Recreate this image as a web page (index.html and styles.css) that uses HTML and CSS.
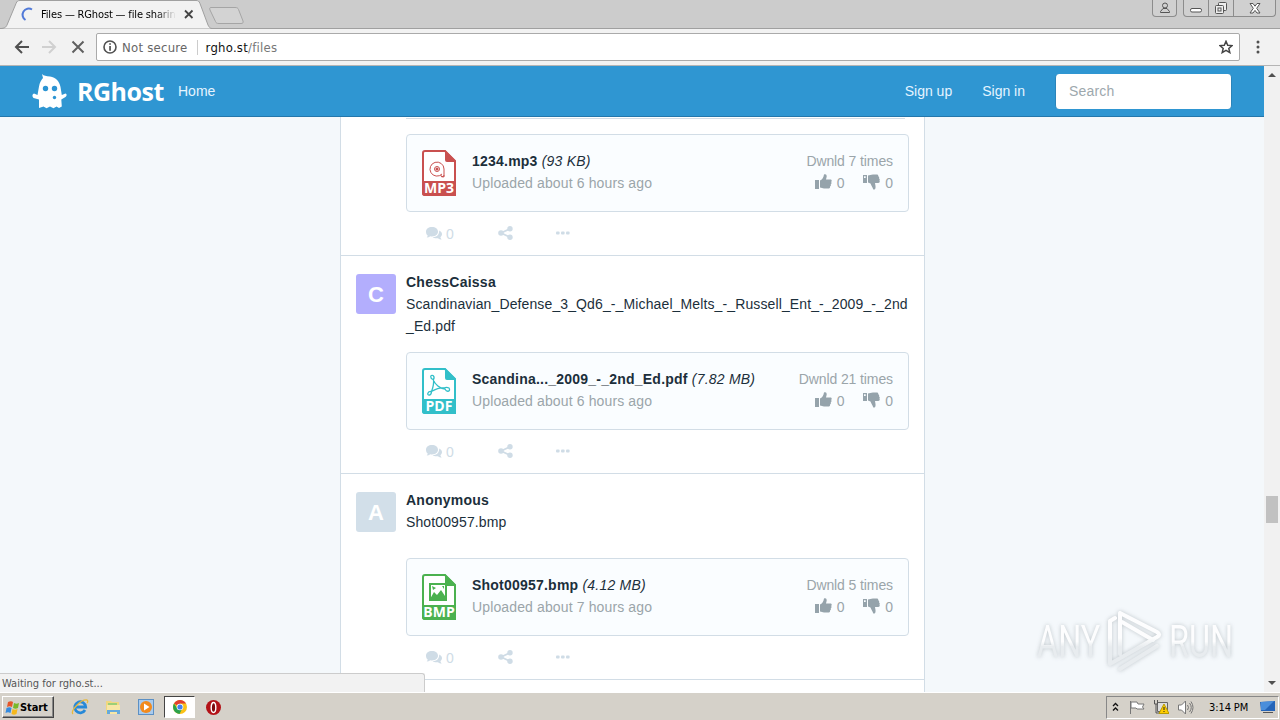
FILE: index.html
```html
<!DOCTYPE html>
<html>
    <head>
        <meta charset="utf-8">
        <title>Files — RGhost — file sharing</title>
        <link rel="stylesheet" href="styles.css">
    </head>
    <body>
        <svg class="sprite" width="0" height="0">
            <symbol id="icon-up" viewBox="0 0 17 16">
                <path d="M0 6h4v9H0zM5 6.500C7 6 8.500 3.500 9 .5c2-1 3 .5 2.600 2.500L11 5.500h4.500c1.500 0 1.500 2 .6 2.400.8.800.5 2-.4 2.300.6.900.1 2-.7 2.200.3 1.300-.4 2.100-1.500 2.100H9c-1.500 0-2.500-1-4-1z"/>
            </symbol>
            <symbol id="icon-down" viewBox="0 0 17 16">
                <path fill-rule="evenodd" d="M0 1h4v8H0zM1 2.300v1.700h1.700V2.300zM5 1.500C6.500 1.500 8 .5 10 .5h3.500c1.200 0 2 .7 1.700 1.800.9.300 1.300 1.200.8 2.200.9.500 1 1.600.4 2.200C17.300 7.500 16.500 9 15.300 9H12l.5 3c.3 3-.8 4-2.200 3.500C9.500 13 8 11 7.500 9.500L5 8.500z"/>
            </symbol>
            <symbol id="icon-comments" viewBox="0 0 17 14">
                <path d="M6 0c3.500 0 6 2 6 4.700S9.500 9.400 6 9.400c-.6 0-1.200 0-1.700-.2C3.300 10 2 10.500.7 10.600c.5-.6 1-1.300 1.100-2C.6 7.700 0 6.300 0 4.700 0 2 2.500 0 6 0z"/>
                <path d="M13.200 3.500c1.700.7 2.800 2 2.800 3.600 0 1.200-.6 2.300-1.600 3.100.2.900.7 1.700 1.300 2.300-1.400 0-2.800-.5-3.800-1.300-2 .4-4 0-5.300-.9 4-.2 6.800-2.600 6.600-6.800z"/>
            </symbol>
            <symbol id="icon-share" viewBox="0 0 15 14">
                <path d="M3 7l9-4.200M3 7l9 4.200" stroke="currentColor" stroke-width="1.800"/>
                <circle cx="3" cy="7" r="2.800"/><circle cx="12" cy="2.800" r="2.700"/><circle cx="12" cy="11.200" r="2.700"/>
            </symbol>
            <symbol id="icon-more" viewBox="0 0 14 4">
                <rect x="0" y=".5" width="3.600" height="3" rx="1"/><rect x="5" y=".5" width="3.600" height="3" rx="1"/><rect x="10" y=".5" width="3.600" height="3" rx="1"/>
            </symbol>
            <symbol id="file-sheet" viewBox="0 0 34 46">
                <path d="M3 1h20l10 10v34H3a2 2 0 0 1-2-2V3a2 2 0 0 1 2-2z" fill="#fff" stroke="currentColor" stroke-width="2"/>
                <path d="M23 0l11 11v1H25a2 2 0 0 1-2-2zM0 31h34v12a3 3 0 0 1-3 3H3a3 3 0 0 1-3-3z"/>
            </symbol>
        </svg>

        <div class="tabstrip">
            <svg class="tab-shape" width="250" height="28">
                <path d="M0 28.500C5 28.500 6 27 7 25L16 3.500C17 1 18 .5 20 .5H196c2 0 3 .5 4 3L208 25c1 2 2 3.500 4 3.500" fill="#f2f2f2" stroke="#a0a0a0"/>
                <path d="M211 7.500h24c2 0 3 .5 3.500 2L243 21c.5 1.500 0 2.500-2 2.500h-22c-2 0-3-.5-3.500-2L210 10c-.6-1.500-.4-2.500 1-2.500z" fill="#d3d3d3" stroke="#a5a5a5"/>
            </svg>
            <div class="tab">
                <svg width="13" height="14"><path d="M11 2.500A5.300 5.300 0 1 0 4.500 13" fill="none" stroke="#5079d8" stroke-width="2"/></svg>
                <span class="tab-title">Files — RGhost — file sharing</span>
                <svg width="10" height="10"><path d="M1 1.500L8.500 9M8.500 1.500L1 9" stroke="#444" stroke-width="1.800"/></svg>
            </div>
            <div class="window-buttons">
                <span class="win-btn user"><svg width="12" height="12" fill="none" stroke="#555"><circle cx="6" cy="3.500" r="2.500"/><path d="M1.500 10.500V9.500L4 6.500h4l2.500 3v1z"/></svg></span>
                <span class="win-btn min"><svg width="12" height="5"><rect x=".5" y=".5" width="11" height="3.500" rx="1.500" fill="#fff" stroke="#555"/></svg></span>
                <span class="win-btn max"><svg width="14" height="13" fill="#eee" stroke="#555"><rect x="4.500" y=".5" width="8" height="8" rx="1"/><rect x="1.500" y="3.500" width="8" height="8" rx="1"/><rect x="4" y="6" width="3" height="3"/></svg></span>
                <span class="win-btn close"><svg width="12" height="11"><path d="M1 .5h3l2 2.700L8 .5h3L7.700 5.300 11 10H8L6 7.400 4 10H1l3.300-4.700z" fill="#fff" stroke="#555"/></svg></span>
            </div>
        </div>

        <div class="toolbar">
            <svg class="nav-icons" width="74" height="16" fill="none" stroke-width="2">
                <path d="M16 8H3M9 2L3 8l6 6" stroke="#505050"/>
                <path d="M29 8h13M36 2l6 6-6 6" stroke="#d0d0d0"/>
                <path d="M59.500 2.500l11 11M70.500 2.500l-11 11" stroke="#606060"/>
            </svg>
            <div class="address">
                <svg width="14" height="14"><circle cx="7" cy="7" r="6" fill="none" stroke="#505050" stroke-width="1.600"/><path d="M6.200 3.200h1.700v1.600H6.200zM6.200 6h1.700v4.700H6.200z" fill="#505050"/></svg>
                <span class="not-secure">Not secure</span>
                <span class="url">rgho.st<span>/files</span></span>
                <svg class="star" width="14" height="14"><path d="M7 1.300l1.700 3.900 4.300.4-3.200 2.800 1 4.200L7 10.400l-3.800 2.200 1-4.200L1 5.600l4.300-.4z" fill="none" stroke="#444" stroke-width="1.500"/></svg>
            </div>
            <svg class="menu-dots" width="4" height="14" fill="#505050"><circle cx="2" cy="2" r="1.500"/><circle cx="2" cy="7" r="1.500"/><circle cx="2" cy="12" r="1.500"/></svg>
        </div>

        <div class="viewport">
            <div class="page">
                <div class="navbar">
                    <svg class="ghost" width="36" height="36" viewBox="0 0 36 36">
                        <path d="M10 1c2 2 4 2 8 2.500 6 1 9.500 5 10.500 10.500l1.300 8 3.700-1.500c1.500.5 1.500 2.500 0 3.500l-4.200 2.500.5 7-2.800 1.500-2.500-1.500-3 1.700-3.500-1.700-3.500 1.700-3-1.700-4.500 1.500V26.500L1.500 25C0 23.500 0 21 2 20.500l3.500 1.500L7 13.500C7.500 9.500 9.500 7 11 5z" fill="#fff"/>
                        <g fill="#2b94d3"><circle cx="13.500" cy="15.500" r="2.700"/><circle cx="22.500" cy="15.500" r="2.700"/><circle cx="22.500" cy="24.500" r="1.700"/></g>
                    </svg>
                    <span class="brand">RGhost</span>
                    <a class="home">Home</a>
                    <a class="sign-up">Sign up</a>
                    <a class="sign-in">Sign in</a>
                    <div class="search">Search</div>
                </div>
                <div class="feed">
                    <div class="post post-cut">
                        <div class="post-body">
                            <div class="card-end"></div>
                            <div class="card">
                                <svg class="file mp3" width="34" height="46">
                                    <use href="#file-sheet"/>
                                    <g fill="none" stroke="currentColor"><path d="M20 24a7 7 0 1 1 2-5v8l-3-1M19 25c-1 2 3 3 3 0"/><circle cx="15" cy="19" r="2.500"/></g><circle cx="15" cy="19" r="1.500"/>
                                    <text x="17" y="43">MP3</text>
                                </svg>
                                <div class="info"><div><b>1234.mp3</b> <i>(93 KB)</i></div><div class="muted">Uploaded about 6 hours ago</div></div>
                                <div class="stats"><div>Dwnld 7 times</div><div class="votes"><svg><use href="#icon-up"/></svg><span>0</span><svg><use href="#icon-down"/></svg><span>0</span></div></div>
                            </div>
                            <div class="actions"><svg class="a-comments"><use href="#icon-comments"/></svg><span>0</span><svg class="a-share"><use href="#icon-share"/></svg><svg class="a-more"><use href="#icon-more"/></svg></div>
                        </div>
                    </div>
                    <div class="post">
                        <div class="avatar purple">C</div>
                        <div class="post-body">
                            <div class="text"><b>ChessCaissa</b><p>Scandinavian_Defense_3_Qd6_-_Michael_Melts_-_Russell_Ent_-_2009_-_2nd<br>_Ed.pdf</p></div>
                            <div class="card">
                                <svg class="file pdf" width="34" height="46">
                                    <use href="#file-sheet"/>
                                    <path d="M11 7.500c-3-1-3 3 0 4 2 5 7 9 12 9.500 2 4 6 2 4-1-2-1-4-.5-5 0-5-1-8 1-12.500 3.500-4-.5-5 4-2 3.500 2-.5 2-2 2-3.500 2-5 2.500-8 2-12 .8-1.500.8-3-.5-4z" fill="none" stroke="currentColor" stroke-width="1.300"/>
                                    <text x="17" y="43">PDF</text>
                                </svg>
                                <div class="info"><div><b>Scandina..._2009_-_2nd_Ed.pdf</b> <i>(7.82 MB)</i></div><div class="muted">Uploaded about 6 hours ago</div></div>
                                <div class="stats"><div>Dwnld 21 times</div><div class="votes"><svg><use href="#icon-up"/></svg><span>0</span><svg><use href="#icon-down"/></svg><span>0</span></div></div>
                            </div>
                            <div class="actions"><svg class="a-comments"><use href="#icon-comments"/></svg><span>0</span><svg class="a-share"><use href="#icon-share"/></svg><svg class="a-more"><use href="#icon-more"/></svg></div>
                        </div>
                    </div>
                    <div class="post">
                        <div class="avatar">A</div>
                        <div class="post-body">
                            <div class="text"><b>Anonymous</b><p>Shot00957.bmp</p></div>
                            <div class="card">
                                <svg class="file bmp" width="34" height="46">
                                    <use href="#file-sheet"/>
                                    <rect x="8" y="10" width="16" height="16" fill="none" stroke="currentColor" stroke-width="2"/><path d="M8 25l4-7 3 3 4-5 4 6v4zM10 12l4 2-3 2zM20 12h2v3z"/>
                                    <text x="17" y="43">BMP</text>
                                </svg>
                                <div class="info"><div><b>Shot00957.bmp</b> <i>(4.12 MB)</i></div><div class="muted">Uploaded about 7 hours ago</div></div>
                                <div class="stats"><div>Dwnld 5 times</div><div class="votes"><svg><use href="#icon-up"/></svg><span>0</span><svg><use href="#icon-down"/></svg><span>0</span></div></div>
                            </div>
                            <div class="actions"><svg class="a-comments"><use href="#icon-comments"/></svg><span>0</span><svg class="a-share"><use href="#icon-share"/></svg><svg class="a-more"><use href="#icon-more"/></svg></div>
                        </div>
                    </div>
                </div>
            </div>
            <div class="scrollbar">
                <svg width="8" height="4"><path d="M0 4l4-4 4 4z" fill="#505050"/></svg>
                <div class="thumb"></div>
                <svg width="8" height="4"><path d="M0 0h8L4 4z" fill="#505050"/></svg>
            </div>
            <div class="status">Waiting for rgho.st...</div>
            <div class="watermark">
                <span>ANY</span>
                <svg width="60" height="64" viewBox="0 0 60 64" fill="none" stroke="url(#fade)" stroke-width="4" stroke-linejoin="round" stroke-linecap="round">
                    <linearGradient id="fade" gradientUnits="userSpaceOnUse" x1="0" y1="0" x2="0" y2="64"><stop offset=".45" stop-color="#fff"/><stop offset=".6" stop-color="#e6eaed"/></linearGradient>
                    <path d="M5 55V12l5-3M5 55l47-27c3-2 3-3 0-5L15 4v41"/>
                    <path d="M17 13l31 18M15 60l37-23"/>
                </svg>
                <span>RUN</span>
            </div>
        </div>

        <div class="taskbar">
            <div class="start">
                <svg width="15" height="15"><path d="M3 2c2-1 4-1 5 0L7 7C5 6 4 6 2 7z" fill="#e5562a"/><path d="M9 3c2 1 3 1 5 0l-1 5c-2 1-3 1-5 0z" fill="#79b829"/><path d="M1.500 8c2-1 4-1 5 0l-1 5c-2-1-3-1-5 0z" fill="#348be0"/><path d="M7.500 9c2 1 3 1 5 0l-1 5c-2 1-3 1-5 0z" fill="#f5b81c"/></svg>
                Start
            </div>
            <svg class="ie" width="18" height="18"><path d="M14 12a5.500 5.500 0 1 1 .7-3H5" fill="none" stroke="#2789d8" stroke-width="2.800"/><path d="M2 16C-1 13 10 1 16 2c1 .5 1 2 0 3" fill="none" stroke="#e8b93c" stroke-width="1.300"/></svg>
            <svg class="folder" width="18" height="17"><path d="M2 2h5l1 1h7v12H2z" fill="#f1d77f"/><path d="M4 4h9v3H4z" fill="#9bcf77"/><path d="M3 6h13v9H3z" fill="#f7e6a5"/><path d="M3 15v-4h13v4h-3v-2H6v2z" fill="#65a9dc"/></svg>
            <svg class="player" width="16" height="16"><rect x=".5" y=".5" width="15" height="15" fill="#a9cbed" stroke="#5c90c4"/><circle cx="8" cy="8" r="6" fill="#f28a1c"/><path d="M6 4.500v7L11.500 8z" fill="#fff"/></svg>
            <div class="task-active">
                <svg width="14" height="14" viewBox="0 0 14 14"><circle cx="7" cy="7" r="7" fill="#fbc116"/><path d="M7 7L1 3.500A7 7 0 0 1 13 3.500H7z" fill="#e13f31"/><path d="M1 3.500A7 7 0 0 0 6.500 14L9 9 4 8z" fill="#2ba24c"/><circle cx="7" cy="7" r="3.300" fill="#fff"/><circle cx="7" cy="7" r="2.600" fill="#4381ee"/></svg>
            </div>
            <svg class="opera" width="15" height="15"><circle cx="7.500" cy="7.500" r="7.500" fill="#b31217"/><ellipse cx="7.500" cy="7.500" rx="2.300" ry="5" fill="#7d0b0e" stroke="#fff" stroke-width="1.400"/></svg>
            <div class="tray">
                <svg class="chevrons" width="7" height="10" fill="none" stroke="#111" stroke-width="1.300"><path d="M1 4l2.500-2.500L6 4M1 8.500L3.500 6 6 8.500"/></svg>
                <svg class="flag" width="16" height="15"><path d="M1.500 1v13M2 2h6l1 2h6l-1.500 3L15 9H8L7 8H2z" fill="#fff" stroke="#777"/></svg>
                <svg class="network" width="16" height="16"><path d="M4.500 3.500h10v9h-10z" fill="#ddd" stroke="#666"/><path d="M1.500 1v4h3V1M3 5v9h4" fill="none" stroke="#555"/><path d="M11 5l5 9.500H6z" fill="#fc0" stroke="#b89b00"/><path d="M10.500 8h1v3h-1zM10.500 12h1v1h-1z" fill="#222"/></svg>
                <svg class="sound" width="17" height="15" fill="none" stroke="#777"><path d="M1.500 5h3l4-4v13l-4-4h-3z" fill="#fff"/><path d="M10.500 5q2 2.500 0 5M12.500 3q3.500 4.500 0 9M14 1.500q4 6 0 12"/></svg>
                <span class="clock">3:14 PM</span>
                <svg class="desktop" width="16" height="14"><path d="M0 2l15-1v10H1z" fill="#2464b8"/><path d="M1 2l13-1-9 9H1z" fill="#4a8edb"/><path d="M3 12h10v1H3z" fill="#555"/></svg>
            </div>
        </div>
    </body>
</html>
```
FILE: styles.css
```css
* {
    box-sizing: border-box;
}

html, body {
    margin: 0;
    padding: 0;
}

body {
    display: flex;
    flex-direction: column;
    width: 1280px;
    height: 720px;
    overflow: hidden;
    font-family: "Liberation Sans", Arial, sans-serif;
    font-size: 14px;
}

svg {
    display: block;
    flex: none;
}

p {
    margin: 0;
}

.sprite {
    position: absolute;
}

/* Browser frame */

.tabstrip {
    position: relative;
    display: flex;
    justify-content: space-between;
    height: 29px;
    background: #ccc;
    border-bottom: 1px solid #a0a0a0;
    font-family: "DejaVu Sans Condensed", "DejaVu Sans", sans-serif;
}

.tab-shape {
    position: absolute;
    left: 0;
    top: 0;
    height: 29px;
}

.tab {
    position: relative;
    display: flex;
    align-items: center;
    height: 28px;
    padding-left: 21px;
}

.tab-title {
    width: 135px;
    margin: 0 8px 0 7px;
    overflow: hidden;
    white-space: nowrap;
    font-size: 11px;
    letter-spacing: -0.15px;
    color: #000;
    -webkit-mask-image: linear-gradient(90deg, #000 115px, transparent);
}

.window-buttons {
    display: flex;
    height: 17px;
    margin-right: 4px;
}

.win-btn {
    display: flex;
    align-items: center;
    justify-content: center;
    border: 1px solid #8c8c8c;
    border-top: 0;
    border-left-width: 0;
    background: #d0d0d0;
}

.user {
    width: 25px;
    margin-right: 6px;
    border-left-width: 1px;
    border-radius: 0 0 4px 4px;
}

.min {
    width: 26px;
    padding-top: 4px;
    border-left-width: 1px;
    border-radius: 0 0 0 4px;
}

.max {
    width: 25px;
}

.close {
    width: 42px;
    border-radius: 0 0 4px 0;
}

.toolbar {
    display: flex;
    align-items: center;
    height: 37px;
    padding-left: 13px;
    background: #f2f2f2;
    border-bottom: 1px solid #b5b5b5;
}

.address {
    display: flex;
    align-items: center;
    width: 1144px;
    height: 28px;
    margin: 0 16px 0 9px;
    padding: 0 6px;
    background: #fff;
    border: 1px solid #aaa;
    border-radius: 2px;
    font-family: "DejaVu Sans Condensed", "DejaVu Sans", sans-serif;
    font-size: 13px;
    letter-spacing: 0.25px;
}

.not-secure {
    margin-left: 5px;
    padding-right: 9px;
    border-right: 1px solid #ccc;
    color: #666;
}

.url {
    padding-left: 8px;
    color: #111;
}

.url span {
    color: #777;
}

.star {
    margin-left: auto;
}

/* Page */

.viewport {
    position: relative;
    display: flex;
    height: 626px;
}

.page {
    width: 1264px;
    overflow: hidden;
    background: #f4f8fb;
}

.navbar {
    display: flex;
    align-items: center;
    height: 51px;
    padding: 0 32px;
    background: #2f96d2;
    border-bottom: 1px solid #2477ab;
    color: #fff;
}

.navbar a {
    color: #e5f4ff;
}

.brand {
    width: 87px;
    margin: 0 14px 0 9px;
    font-family: "Open Sans", "Noto Sans", sans-serif;
    font-size: 25px;
    font-weight: 700;
    letter-spacing: -0.5px;
}

.sign-up {
    margin-left: auto;
}

.sign-in {
    margin: 0 30px;
}

.search {
    width: 177px;
    height: 35px;
    padding-left: 13px;
    background: #fff;
    border: 1px solid #2b84ba;
    border-width: 0 1px;
    border-radius: 4px;
    line-height: 35px;
    letter-spacing: 0.2px;
    color: #9da8ad;
}

.feed {
    width: 585px;
    height: 580px;
    margin-left: 340px;
    background: #fff;
    border: 1px solid #d2dde6;
    border-width: 0 1px;
    color: #1c2f3b;
    line-height: 22px;
}

.post {
    display: flex;
    padding: 15px 15px 0;
    border-bottom: 1px solid #d2dde6;
}

.post-cut {
    padding: 1px 15px 0 65px;
}

.avatar {
    width: 40px;
    height: 40px;
    margin: 3px 10px 0 0;
    border-radius: 3px;
    background: #d2dfe9;
    color: #fff;
    font-size: 22px;
    font-weight: 700;
    line-height: 42px;
    text-align: center;
}

.purple {
    background: #b3aefd;
}

.post-body {
    width: 503px;
}

.card-end {
    height: 1px;
    margin: 0 4px 15px 0;
    background: #d2dde6;
}

.text {
    min-height: 54px;
    margin-bottom: 15px;
    letter-spacing: 0.12px;
    white-space: nowrap;
}

.text b {
    letter-spacing: 0.25px;
}

.card {
    display: flex;
    height: 78px;
    padding: 15px;
    background: #fafdff;
    border: 1px solid #d2dde6;
    border-radius: 4px;
}

.file {
    margin-right: 16px;
    fill: currentColor;
}

.file text {
    fill: #fff;
    font-family: "Open Sans", sans-serif;
    font-size: 14px;
    font-weight: 700;
    text-anchor: middle;
}

.mp3 {
    color: #c9504f;
}

.pdf {
    color: #32bfc9;
}

.bmp {
    color: #4bb14f;
}

.info {
    flex: 1;
    letter-spacing: 0.22px;
    white-space: nowrap;
}

.muted, .stats {
    color: #9ba5aa;
}

.info .muted {
    letter-spacing: 0.13px;
}

.stats {
    letter-spacing: -0.1px;
    text-align: right;
}

.votes {
    display: flex;
    align-items: center;
    justify-content: flex-end;
}

.votes svg {
    width: 17px;
    height: 16px;
    margin: -2px 5px 0 19px;
    fill: #95a3ab;
}

.actions {
    display: flex;
    align-items: center;
    height: 43px;
    padding-left: 20px;
    color: #cfdce6;
    fill: currentColor;
}

.actions span {
    margin: 1px 44px 0 3px;
}

.a-comments {
    width: 17px;
    height: 14px;
}

.a-share {
    width: 15px;
    height: 14px;
    margin: -2px 43px 0 0;
}

.a-more {
    width: 14px;
    height: 4px;
    margin-top: -2px;
}

.scrollbar {
    display: flex;
    flex-direction: column;
    align-items: center;
    justify-content: space-between;
    width: 16px;
    padding: 7px 0;
    background: #f1f1f1;
}

.thumb {
    width: 12px;
    height: 27px;
    margin-top: 417px;
    margin-bottom: 156px;
    background: #c1c1c1;
}

.status {
    position: absolute;
    left: 0;
    bottom: 0;
    width: 425px;
    height: 19px;
    padding-left: 2px;
    background: #f2f2f2;
    border: 1px solid #ccc;
    border-width: 1px 1px 0 0;
    border-radius: 0 3px 0 0;
    font-family: "DejaVu Sans Condensed", "DejaVu Sans", sans-serif;
    font-size: 11px;
    line-height: 19px;
    color: #555;
}

.watermark {
    position: absolute;
    left: 1037px;
    top: 543px;
    display: flex;
    align-items: center;
    width: 196px;
    height: 64px;
    justify-content: space-between;
    color: #fff;
    filter: drop-shadow(0 0 2px #b5bcc1);
    opacity: 0.85;
}

.watermark span {
    width: 64px;
    font-family: Roboto, sans-serif;
    font-size: 45px;
    font-weight: 400;
    color: transparent;
    background: linear-gradient(#fff 50%, #e6eaed 60%);
    background-size: 90px 100%;
    -webkit-background-clip: text;
    display: flex;
    width: 90px;
    margin-right: -26px;
    transform: scaleX(0.72);
    transform-origin: left;
}

/* Taskbar */

.taskbar {
    display: flex;
    align-items: center;
    height: 28px;
    padding: 1px 1px 0 2px;
    background: #d5d1c9;
    border-top: 1px solid #fff;
    font-family: "DejaVu Sans Condensed", "DejaVu Sans", sans-serif;
    font-size: 11px;
}

.start {
    display: flex;
    align-items: center;
    width: 52px;
    height: 22px;
    padding-left: 2px;
    border: 1px solid;
    border-color: #fff #444 #444 #fff;
    box-shadow: inset -1px -1px #888;
    font-weight: 700;
    letter-spacing: -0.1px;
}

.ie {
    margin-left: 17px;
}

.folder {
    margin-left: 15px;
}

.player {
    margin-left: 16px;
}

.task-active {
    display: flex;
    align-items: center;
    justify-content: center;
    width: 31px;
    height: 22px;
    margin: 0 11px 0 10px;
    background: #fff;
    border: 1px solid;
    border-color: #444 #fff #fff #444;
}

.tray {
    display: flex;
    align-items: center;
    width: 173px;
    height: 23px;
    margin-left: auto;
    padding-left: 5px;
    border: 1px solid;
    border-color: #888 #fff #fff #888;
}

.flag {
    margin-left: 10px;
}

.network {
    margin-left: 8px;
}

.sound {
    margin-left: 8px;
}

.clock {
    width: 41px;
    margin: 0 10px 0 15px;
    white-space: nowrap;
    letter-spacing: -0.1px;
}
```
